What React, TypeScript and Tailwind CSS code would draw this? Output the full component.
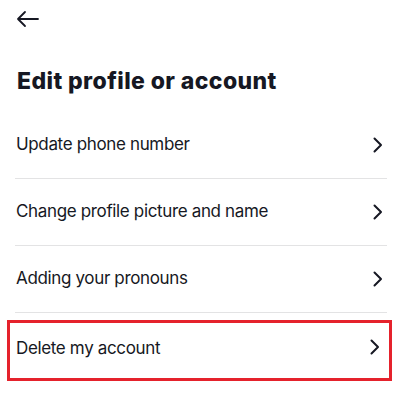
const rows = ['Update phone number', 'Change profile picture and name', 'Adding your pronouns'];

function Chevron() {
  return (
    <svg width="10" height="16" viewBox="0 0 10 16" fill="none" className="shrink-0">
      <path d="M1.5 1.5 L8 8 L1.5 14.5" stroke="#161823" strokeWidth="2" strokeLinecap="round" strokeLinejoin="round" />
    </svg>
  );
}

export default function App() {
  return (
    <div className="w-[402px] h-[400px] bg-white text-[#161823] overflow-hidden" style={{ fontFamily: 'Inter, "Liberation Sans", sans-serif' }}>
      {/* Back */}
      <div className="h-[38px] pl-[16px] pt-[10px]">
        <svg width="24" height="18" viewBox="0 0 24 18" fill="none">
          <path d="M22 9 H2 M9 2 L2 9 L9 16" stroke="#161823" strokeWidth="1.8" strokeLinecap="round" strokeLinejoin="round" />
        </svg>
      </div>

      {/* Title */}
      <h1 className="px-[17px] mt-[29px] text-[23px] leading-[28px] font-extrabold tracking-[0.4px]">Edit profile or account</h1>

      {/* List */}
      <div className="mt-[17px]">
        {rows.map(label => (
          <div key={label} className="mx-[15px] h-[67px] flex items-center justify-between border-b border-[#e3e3e4] pl-[1px] pr-[4px]">
            <span className="text-[17px] tracking-[-0.35px]">{label}</span>
            <Chevron />
          </div>
        ))}
        <div className="mt-[7px] ml-[7px] w-[385px] h-[61px] border-[3px] border-[#e5222c] flex items-start justify-between pl-[6px] pr-[9px] pt-[13px]">
          <span className="text-[17px] tracking-[-0.35px]">Delete my account</span>
          <div className="pt-[3px]"><Chevron /></div>
        </div>
      </div>
    </div>
  );
}
